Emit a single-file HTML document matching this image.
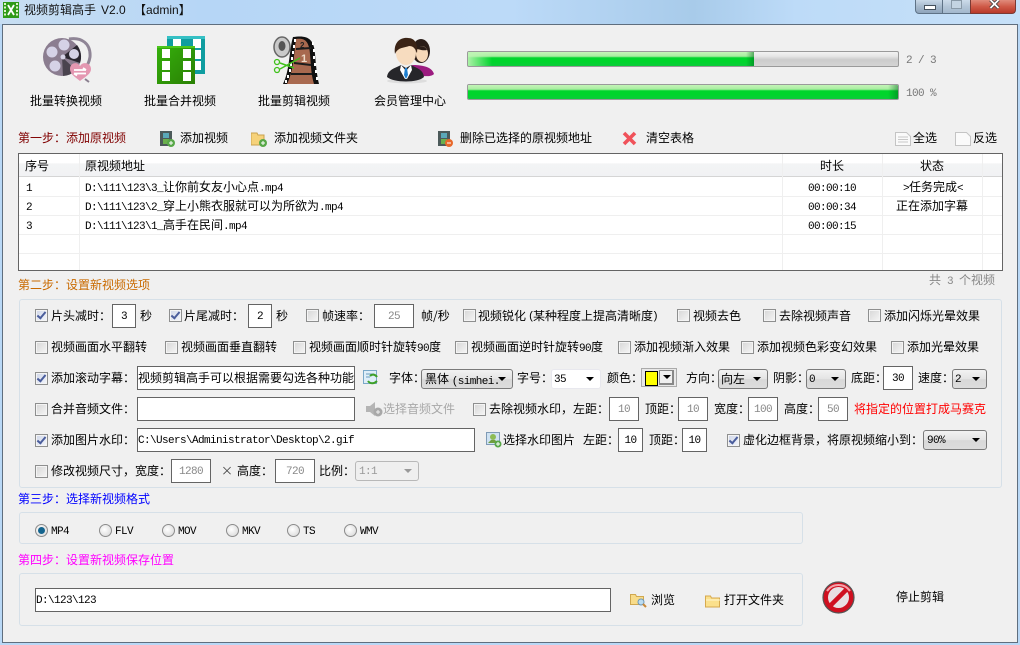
<!DOCTYPE html>
<html><head><meta charset="utf-8"><style>
html,body{margin:0;padding:0;width:1020px;height:645px;overflow:hidden}
body{position:relative;background:#b9d8f6;font:12px/14px "WenQuanYi Zen Hei","Noto Sans CJK SC","Liberation Sans",sans-serif;color:#000}
div,svg{position:absolute}
.t{position:absolute;white-space:nowrap;line-height:14px}
.m{font-family:"Liberation Mono",monospace;font-size:11px;letter-spacing:-.6px}
.m i{font:12px/14px "WenQuanYi Zen Hei","Noto Sans CJK SC",sans-serif;letter-spacing:0}
.c{position:absolute;width:11px;height:11px;border:1px solid #8e8f8f;background:linear-gradient(135deg,#d6d6d6,#f6f6f6);box-shadow:inset 0 0 0 1px #f4f4f4}
.k{background:linear-gradient(135deg,#cfd6e8,#f4f6fb)}
.k:after{content:"";position:absolute;left:3px;top:0;width:3px;height:7px;border:solid #4a5d9c;border-width:0 2px 2px 0;transform:rotate(40deg)}
.i{position:absolute;box-sizing:border-box;border:1px solid #646464;background:#fff;height:24px;text-align:center;line-height:25px;font-family:"Liberation Mono",monospace;font-size:11px;letter-spacing:-.6px;white-space:nowrap}
.d{color:#888}
.s{position:absolute;box-sizing:border-box;border:1px solid #7a7a7a;border-radius:3px;height:20px;background:linear-gradient(#f2f2f2,#e4e4e4 50%,#d8d8d8 52%,#dcdcdc);line-height:17px;padding-left:4px;white-space:nowrap;overflow:hidden}
.s.m{line-height:20px}
.s:after{content:"";position:absolute;right:6px;top:7px;border:4px solid transparent;border-top:4px solid #000;border-bottom:0}
.s.n:after{border-top-color:#999}
.g{position:absolute;box-sizing:border-box;border:1px solid #d6e0e8;border-radius:3px}
.r{position:absolute;box-sizing:border-box;width:13px;height:13px;border:1px solid #8b8b8b;border-radius:50%;background:radial-gradient(circle at 40% 40%,#fff,#d4d4d4)}
.l{position:absolute;background:#efefef}
.b{position:absolute;height:16px;box-sizing:border-box;border:1px solid #9a9a9a;border-radius:2px;overflow:hidden;background:linear-gradient(#f2f2f2 0,#e6e6e6 30%,#cccccc 55%,#d4d4d4 100%)}
.f{position:absolute;left:0;top:0;bottom:0;background:linear-gradient(#c4f5b8 0,#a8eda0 30%,#00d52c 42%,#00d52c 70%,#0dcb3a 100%)}
</style></head><body>

<!-- title bar -->
<div style="left:0;top:0;width:1020px;height:24px;background:linear-gradient(90deg,#c8def2 0,#b6d6f6 20%,#bcdaf8 50%,#a8cbea 68%,#bddbf8 78%,#c6e0f8 100%)"></div>
<svg style="left:3px;top:2px" width="16" height="16" viewBox="0 0 16 16"><rect width="16" height="16" fill="#2f9a18"/><path d="M2 1v14M14 1v14" stroke="#dff3c8" stroke-width="2" stroke-dasharray="2 1.5"/><path d="M5 3l6 10M11 3l-6 10" stroke="#fff" stroke-width="1.8"/></svg>
<div class="t" style="left:24px;top:3px;color:#111">视频剪辑高手</div>
<div class="t" style="left:101px;top:3px;color:#111;font-family:'Liberation Sans',sans-serif">V2.0</div>
<div class="t" style="left:134px;top:3px;color:#111">【<span style="font-family:'Liberation Sans',sans-serif">admin</span>】</div>

<!-- window buttons -->
<div style="left:915px;top:0;width:28px;height:14px;box-sizing:border-box;border:1px solid #5e7286;border-top:0;border-radius:0 0 0 4px;background:linear-gradient(#c9d9e8,#a7bacd 50%,#8ea4bb)"></div>
<div style="left:924px;top:5px;width:12px;height:5px;box-sizing:border-box;border:1px solid #44505c;background:#fff"></div>
<div style="left:943px;top:0;width:27px;height:14px;box-sizing:border-box;border-bottom:1px solid #5e7286;background:linear-gradient(#cddcea,#b4c6d8 50%,#a3b8cd)"></div>
<div style="left:951px;top:0;width:11px;height:9px;box-sizing:border-box;border:1px solid #8a9aa8;background:#c4d4e2"></div>
<div style="left:970px;top:0;width:46px;height:14px;box-sizing:border-box;border:1px solid #7a3a34;border-top:0;border-radius:0 0 4px 0;background:linear-gradient(#e08c7c,#cf5a48 50%,#b83a2a)"></div>
<svg style="left:988px;top:0" width="13" height="9" viewBox="0 0 13 9"><path d="M2.500 0l8 8M10.500 0l-8 8" stroke="#3e3e3e" stroke-width="3.400"/><path d="M2.500 0l8 8M10.500 0l-8 8" stroke="#fff" stroke-width="1.800"/></svg>

<!-- window body -->
<div style="left:2px;top:24px;width:1016px;height:619px;box-sizing:border-box;border:1px solid #5f6e7e;background:#f0f0f0"></div>

<!-- big icons -->
<svg style="left:43px;top:37px" width="50" height="47" viewBox="0 0 50 47">
<path d="M26 2c12-2 22 4 21 18-1 6-3 9-5 11" fill="none" stroke="#8f8596" stroke-width="3"/>
<circle cx="19" cy="20" r="19" fill="#8b7d90"/>
<path d="M19 20L34 8a19 19 0 0 1 3 18z" fill="#2b2730"/><path d="M19 20L20 39a19 19 0 0 0 13-6z" fill="#4a434e"/>
<g fill="#d5d2e6"><circle cx="21" cy="8" r="5.500"/><circle cx="9" cy="15" r="5.500"/><circle cx="12" cy="29" r="5.500"/><circle cx="31" cy="17" r="5"/><circle cx="20" cy="20" r="2.500"/></g>
<path d="M37 44c-5-4-10-7-10-12 0-6 7-8 10-3 3-5 11-3 11 3 0 5-6 8-11 12z" fill="#e497b1"/>
<path d="M31 33h12M43 33l-3-2M43 36.500H31M31 36.500l3 2" stroke="#fff" stroke-width="1.800" fill="none"/>
<path d="M42 42l4 3" stroke="#8a7f8f" stroke-width="2"/></svg>

<svg style="left:157px;top:36px" width="49" height="48" viewBox="0 0 49 48">
<defs><linearGradient id="gg" x1="0" y1="0" x2="1" y2="1"><stop offset="0" stop-color="#35b00c"/><stop offset="1" stop-color="#2a8004"/></linearGradient></defs>
<rect x="10" y="0" width="38" height="38" fill="#0f9da0"/><rect x="10" y="0" width="38" height="3" fill="#35c0c4"/>
<g fill="#fff"><rect x="16" y="3" width="8" height="9"/><rect x="36" y="3" width="8" height="9"/><rect x="36" y="14" width="8" height="9"/><rect x="36" y="25" width="8" height="9"/></g>
<rect x="0" y="10" width="38" height="38" fill="url(#gg)"/><rect x="0" y="10" width="38" height="2" fill="#4cc61c"/>
<g fill="#fff"><rect x="5" y="13" width="8" height="9"/><rect x="26" y="13" width="8" height="9"/><rect x="5" y="25" width="8" height="9"/><rect x="26" y="25" width="8" height="9"/><rect x="5" y="36" width="8" height="9"/><rect x="26" y="36" width="8" height="9"/></g></svg>

<svg style="left:272px;top:36px" width="48" height="48" viewBox="0 0 48 48">
<ellipse cx="10" cy="11" rx="8" ry="10" fill="#c9c9c9" stroke="#666" stroke-width="1.500"/><ellipse cx="10" cy="10" rx="3.500" ry="5" fill="#555"/>
<path d="M21 1C35-1 42 2 43 18c1 12 2 22 4 30H11C18 34 17 14 21 1z" fill="#101010"/>
<path d="M24 3c8-1 13 1 14 15 1 12 1 20 4 30H15C22 34 22 16 24 3z" fill="#a8694f"/>
<path d="M24 13l15-1M22 27l17 2M19 38l21 0" stroke="#1c1c1c" stroke-width="2"/>
<g fill="#fff"><rect x="22" y="3" width="2" height="3"/><rect x="21" y="9" width="2" height="3"/><rect x="20" y="15" width="2" height="3"/><rect x="19" y="21" width="2" height="3"/><rect x="18" y="27" width="2" height="3"/><rect x="17" y="33" width="2" height="3"/><rect x="15" y="39" width="2" height="3"/><rect x="13" y="44" width="2" height="3"/><rect x="40" y="6" width="2" height="3"/><rect x="41" y="13" width="2" height="3"/><rect x="41" y="20" width="2" height="3"/><rect x="42" y="27" width="2" height="3"/><rect x="43" y="34" width="2" height="3"/><rect x="44" y="41" width="2" height="3"/></g>
<text x="28" y="12" font-size="8" font-family="Liberation Sans" font-weight="bold" fill="#222">2</text><text x="29" y="26" font-size="11" font-family="Liberation Sans" font-weight="bold" fill="#eedbc8">1</text>
<path d="M8 33l20-11M8 27l14 5" stroke="#3fc11a" stroke-width="1.500" fill="none"/><circle cx="5" cy="26" r="2.500" fill="none" stroke="#3fc11a" stroke-width="1.300"/><circle cx="5" cy="34" r="2.500" fill="none" stroke="#3fc11a" stroke-width="1.300"/></svg>

<svg style="left:387px;top:37px" width="49" height="47" viewBox="0 0 49 47">
<ellipse cx="20" cy="44" rx="20" ry="2.500" fill="#ddd"/>
<path d="M25 28c8 0 20 1 22 9-3 3-9 2-12 2-6-2-8-5-10-11z" fill="#9c1c80"/>
<ellipse cx="34" cy="14" rx="9" ry="12" fill="#2a1d18"/><ellipse cx="35" cy="17" rx="6" ry="8" fill="#f6d8b8"/><path d="M29 12c3-4 9-4 11 1-5 1-8-1-11-1z" fill="#2a1d18"/>
<path d="M0 40c1-8 9-9 14-12l5 3 5-3c5 3 12 4 13 12-6 6-30 6-37 0z" fill="#26262a"/>
<path d="M14 28l5 6 5-6 1 5-5 9h-2l-5-9z" fill="#fff"/><path d="M18 31h2l1 7-2 4-2-4z" fill="#1e7fd0"/>
<ellipse cx="19" cy="16" rx="10" ry="12" fill="#f7dcbf"/><path d="M8 17C6 4 15 0 21 1c7 0 10 6 9 15-2-5-4-7-8-7-5 2-11 1-14 8z" fill="#3b2416"/></svg>

<div class="t" style="left:30px;top:94px">批量转换视频</div>
<div class="t" style="left:144px;top:94px">批量合并视频</div>
<div class="t" style="left:258px;top:94px">批量剪辑视频</div>
<div class="t" style="left:374px;top:94px">会员管理中心</div>

<!-- progress -->
<div class="b" style="left:467px;top:51px;width:432px"><div class="f" style="width:286px"></div><div style="left:0;top:0;bottom:0;width:24px;background:linear-gradient(90deg,rgba(190,245,180,.9),rgba(190,245,180,0))"></div><div style="left:278px;top:0;bottom:0;width:8px;background:linear-gradient(90deg,rgba(0,120,30,0),rgba(0,110,30,.55))"></div></div>
<div class="b" style="left:467px;top:84px;width:432px"><div class="f" style="width:100%"></div><div style="right:0;top:0;bottom:0;width:10px;background:linear-gradient(90deg,rgba(0,120,30,0),rgba(0,110,30,.5))"></div></div>
<div class="t m" style="left:906px;top:54px;color:#777">2 / 3</div>
<div class="t m" style="left:906px;top:87px;color:#777">100 %</div>

<!-- step 1 toolbar -->
<div class="t" style="left:18px;top:131px;color:#800000">第一步：添加原视频</div>
<svg style="left:160px;top:131px" width="15" height="16" viewBox="0 0 15 16"><rect x="0" y="0" width="12" height="15" fill="#4c5a5a"/><rect x="3" y="2" width="6" height="5" fill="#5aa8b8"/><rect x="3" y="8" width="6" height="5" fill="#6ab04c"/><circle cx="11" cy="12" r="4" fill="#58a848"/><path d="M9 12h4M11 10v4" stroke="#fff"/></svg>
<div class="t" style="left:180px;top:131px">添加视频</div>
<svg style="left:251px;top:132px" width="16" height="15" viewBox="0 0 16 15"><path d="M0 1h6l1 2h6v10H0z" fill="#f6d27a" stroke="#c9a24e"/><circle cx="12" cy="11" r="4" fill="#58a848"/><path d="M10 11h4M12 9v4" stroke="#fff"/></svg>
<div class="t" style="left:274px;top:131px">添加视频文件夹</div>
<svg style="left:438px;top:131px" width="15" height="16" viewBox="0 0 15 16"><rect x="0" y="0" width="12" height="15" fill="#4c5a5a"/><rect x="3" y="2" width="6" height="5" fill="#5aa8b8"/><rect x="3" y="8" width="6" height="5" fill="#6ab04c"/><circle cx="11" cy="12" r="4" fill="#e8682a"/><path d="M9 12h4" stroke="#fff"/></svg>
<div class="t" style="left:460px;top:131px">删除已选择的原视频地址</div>
<svg style="left:622px;top:131px" width="15" height="15" viewBox="0 0 15 15"><path d="M2 2l11 11M13 2L2 13" stroke="#f0525a" stroke-width="3.600"/></svg>
<div class="t" style="left:646px;top:131px">清空表格</div>
<svg style="left:895px;top:132px" width="16" height="14" viewBox="0 0 16 14"><path d="M.5.500h11l4 4v9H.5z" fill="#fafafa" stroke="#c4c4c4"/><path d="M3 5h10M3 7.500h10M3 10h10" stroke="#c8c8c8"/></svg>
<div class="t" style="left:913px;top:131px">全选</div>
<svg style="left:955px;top:132px" width="16" height="14" viewBox="0 0 16 14"><path d="M.5.500h11l4 4v9H.5z" fill="#fafafa" stroke="#c4c4c4"/></svg>
<div class="t" style="left:973px;top:131px">反选</div>

<!-- table -->
<div style="left:18px;top:153px;width:985px;height:118px;box-sizing:border-box;border:1px solid #646464;background:#fff"></div>
<div style="left:19px;top:154px;width:983px;height:22px;background:linear-gradient(#fff 0,#fff 40%,#f3f4f5 45%,#f1f2f4 100%)"></div>
<div class="l" style="left:19px;top:176px;width:983px;height:1px;background:#d5d5d5"></div>
<div class="l" style="left:19px;top:196px;width:983px;height:1px"></div>
<div class="l" style="left:19px;top:215px;width:983px;height:1px"></div>
<div class="l" style="left:19px;top:234px;width:983px;height:1px"></div>
<div class="l" style="left:19px;top:253px;width:983px;height:1px"></div>
<div class="l" style="left:79px;top:154px;width:1px;height:116px"></div>
<div class="l" style="left:782px;top:154px;width:1px;height:116px"></div>
<div class="l" style="left:882px;top:154px;width:1px;height:116px"></div>
<div class="l" style="left:982px;top:154px;width:1px;height:116px"></div>
<div class="t" style="left:25px;top:159px">序号</div>
<div class="t" style="left:85px;top:159px">原视频地址</div>
<div class="t" style="left:820px;top:159px">时长</div>
<div class="t" style="left:920px;top:159px">状态</div>
<div class="t m" style="left:26px;top:182px">1</div>
<div class="t m" style="left:26px;top:201px">2</div>
<div class="t m" style="left:26px;top:220px">3</div>
<div class="t m" style="left:85px;top:180px">D:\111\123\3_<i>让你前女友小心点</i>.mp4</div>
<div class="t m" style="left:85px;top:199px">D:\111\123\2_<i>穿上小熊衣服就可以为所欲为</i>.mp4</div>
<div class="t m" style="left:85px;top:218px">D:\111\123\1_<i>高手在民间</i>.mp4</div>
<div class="t m" style="left:808px;top:182px">00:00:10</div>
<div class="t m" style="left:808px;top:201px">00:00:34</div>
<div class="t m" style="left:808px;top:220px">00:00:15</div>
<div class="t m" style="left:903px;top:180px">&gt;<i>任务完成</i>&lt;</div>
<div class="t" style="left:896px;top:199px">正在添加字幕</div>
<div class="t" style="left:929px;top:273px;color:#888">共</div>
<div class="t m" style="left:947px;top:275px;color:#888">3</div>
<div class="t" style="left:959px;top:273px;color:#888">个视频</div>

<!-- step 2 -->
<div class="t" style="left:18px;top:278px;color:#c96a00">第二步：设置新视频选项</div>
<div class="g" style="left:19px;top:299px;width:983px;height:189px"></div>

<!-- row 1 -->
<div class="c k" style="left:35px;top:309px"></div><div class="t" style="left:51px;top:309px">片头减时：</div>
<div class="i" style="left:112px;top:304px;width:24px">3</div><div class="t" style="left:140px;top:309px">秒</div>
<div class="c k" style="left:169px;top:309px"></div><div class="t" style="left:184px;top:309px">片尾减时：</div>
<div class="i" style="left:248px;top:304px;width:24px">2</div><div class="t" style="left:276px;top:309px">秒</div>
<div class="c" style="left:306px;top:309px"></div><div class="t" style="left:322px;top:309px">帧速率：</div>
<div class="i d" style="left:374px;top:304px;width:40px">25</div><div class="t" style="left:421px;top:309px">帧/秒</div>
<div class="c" style="left:463px;top:309px"></div><div class="t" style="left:478px;top:309px">视频锐化</div>
<div class="t m" style="left:528px;top:310px">(</div>
<div class="t" style="left:533px;top:309px">某种程度上提高清晰度</div>
<div class="t m" style="left:652px;top:310px">)</div>
<div class="c" style="left:677px;top:309px"></div><div class="t" style="left:693px;top:309px">视频去色</div>
<div class="c" style="left:763px;top:309px"></div><div class="t" style="left:779px;top:309px">去除视频声音</div>
<div class="c" style="left:868px;top:309px"></div><div class="t" style="left:884px;top:309px">添加闪烁光晕效果</div>

<!-- row 2 -->
<div class="c" style="left:35px;top:341px"></div><div class="t" style="left:51px;top:340px">视频画面水平翻转</div>
<div class="c" style="left:165px;top:341px"></div><div class="t" style="left:181px;top:340px">视频画面垂直翻转</div>
<div class="c" style="left:293px;top:341px"></div><div class="t" style="left:309px;top:340px">视频画面顺时针旋转<span class="m">90</span>度</div>
<div class="c" style="left:455px;top:341px"></div><div class="t" style="left:471px;top:340px">视频画面逆时针旋转<span class="m">90</span>度</div>
<div class="c" style="left:618px;top:341px"></div><div class="t" style="left:634px;top:340px">添加视频渐入效果</div>
<div class="c" style="left:741px;top:341px"></div><div class="t" style="left:757px;top:340px">添加视频色彩变幻效果</div>
<div class="c" style="left:891px;top:341px"></div><div class="t" style="left:907px;top:340px">添加光晕效果</div>

<!-- row 3 -->
<div class="c k" style="left:35px;top:372px"></div><div class="t" style="left:51px;top:371px">添加滚动字幕：</div>
<div class="i" style="left:137px;top:366px;width:218px;text-align:left;line-height:22px;letter-spacing:0;font-size:12px;overflow:hidden;font-family:'WenQuanYi Zen Hei','Noto Sans CJK SC',sans-serif">视频剪辑高手可以根据需要勾选各种功能</div>
<svg style="left:363px;top:370px" width="16" height="16" viewBox="0 0 16 16"><rect x=".5" y=".5" width="13" height="13" fill="#dfeef8" stroke="#7aa8c8"/><path d="M3 4h8M3 7h4" stroke="#6a9cc0"/><path d="M5 11c2 3 6 3 9 0M14 7c-2-3-5-3-7-1" stroke="#3ea028" stroke-width="2" fill="none"/></svg>
<div class="t" style="left:389px;top:371px">字体：</div>
<div class="s" style="left:421px;top:369px;width:92px;padding-left:3px">黑体 <span class="m" style="position:relative;top:1px">(simhei.</span></div>
<div class="t" style="left:517px;top:371px">字号：</div>
<div class="s m" style="left:551px;top:369px;width:50px;border-color:#e8e8ee;background:#fff;padding-left:2px">35</div>
<div class="t" style="left:607px;top:371px">颜色：</div>
<div style="left:641px;top:368px;width:36px;height:19px;box-sizing:border-box;border:1px solid #aaa;background:#e8e8e8"></div>
<div style="left:645px;top:371px;width:11px;height:13px;border:1px solid #000;background:#ff0"></div>
<div style="left:659px;top:370px;width:15px;height:15px;box-sizing:border-box;border:1px solid #888;border-right-width:2px;border-bottom-width:2px;background:#efefef"></div>
<div style="left:663px;top:375px;width:0;height:0;border:4px solid transparent;border-top:4px solid #000;border-bottom:0"></div>
<div class="t" style="left:686px;top:371px">方向：</div>
<div class="s" style="left:718px;top:369px;width:50px;padding-left:2px">向左</div>
<div class="t" style="left:773px;top:371px">阴影：</div>
<div class="s m" style="left:806px;top:369px;width:40px;padding-left:2px">0</div>
<div class="t" style="left:851px;top:371px">底距：</div>
<div class="i" style="left:883px;top:366px;width:30px">30</div>
<div class="t" style="left:918px;top:371px">速度：</div>
<div class="s m" style="left:952px;top:369px;width:35px;padding-left:2px">2</div>

<!-- row 4 -->
<div class="c" style="left:35px;top:403px"></div><div class="t" style="left:51px;top:402px">合并音频文件：</div>
<div class="i" style="left:137px;top:397px;width:218px"></div>
<svg style="left:366px;top:402px" width="17" height="15" viewBox="0 0 17 15"><path d="M0 4h4l5-4v14l-5-4H0z" fill="#b4b4b4"/><circle cx="12" cy="10" r="4.500" fill="#a8a8a8"/><path d="M10 10h4M12 8v4" stroke="#eee"/></svg>
<div class="t" style="left:383px;top:402px;color:#a8a8a8">选择音频文件</div>
<div class="c" style="left:473px;top:403px"></div><div class="t" style="left:489px;top:402px">去除视频水印，左距：</div>
<div class="i d" style="left:609px;top:397px;width:30px">10</div>
<div class="t" style="left:645px;top:402px">顶距：</div>
<div class="i d" style="left:678px;top:397px;width:30px">10</div>
<div class="t" style="left:714px;top:402px">宽度：</div>
<div class="i d" style="left:748px;top:397px;width:30px">100</div>
<div class="t" style="left:784px;top:402px">高度：</div>
<div class="i d" style="left:818px;top:397px;width:30px">50</div>
<div class="t" style="left:854px;top:402px;color:#f00">将指定的位置打成马赛克</div>

<!-- row 5 -->
<div class="c k" style="left:35px;top:434px"></div><div class="t" style="left:51px;top:433px">添加图片水印：</div>
<div class="i" style="left:137px;top:428px;width:338px;text-align:left">C:\Users\Administrator\Desktop\2.gif</div>
<svg style="left:486px;top:432px" width="16" height="16" viewBox="0 0 16 16"><rect x=".5" y=".5" width="13" height="12" fill="#cfe2f2" stroke="#7f9ab5"/><circle cx="7" cy="5" r="3" fill="#8dbb55"/><path d="M2 11l3-3h4l3 3z" fill="#6f9e3e"/><circle cx="12" cy="12" r="3.500" fill="#58a848"/><path d="M10 12h4M12 10v4" stroke="#fff"/></svg>
<div class="t" style="left:503px;top:433px">选择水印图片</div>
<div class="t" style="left:583px;top:433px">左距：</div>
<div class="i" style="left:618px;top:428px;width:25px">10</div>
<div class="t" style="left:649px;top:433px">顶距：</div>
<div class="i" style="left:682px;top:428px;width:25px">10</div>
<div class="c k" style="left:727px;top:434px"></div><div class="t" style="left:743px;top:433px">虚化边框背景，将原视频缩小到：</div>
<div class="s m" style="left:923px;top:430px;width:64px;padding-left:3px">90%</div>

<!-- row 6 -->
<div class="c" style="left:35px;top:465px"></div><div class="t" style="left:51px;top:464px">修改视频尺寸，宽度：</div>
<div class="i d" style="left:171px;top:459px;width:40px">1280</div>
<div class="t" style="left:221px;top:464px;color:#444">×</div>
<div class="t" style="left:237px;top:464px">高度：</div>
<div class="i d" style="left:275px;top:459px;width:40px">720</div>
<div class="t" style="left:319px;top:464px">比例：</div>
<div class="s m n" style="left:355px;top:461px;width:64px;border-color:#b8b8b8;background:#efefef;color:#999;padding-left:3px">1:1</div>

<!-- step 3 -->
<div class="t" style="left:18px;top:492px;color:#00f">第三步：选择新视频格式</div>
<div class="g" style="left:19px;top:512px;width:784px;height:32px"></div>
<div class="r" style="left:35px;top:524px"></div><div style="left:38px;top:527px;width:7px;height:7px;border-radius:50%;background:#14648e"></div>
<div class="t m" style="left:51px;top:525px">MP4</div>
<div class="r" style="left:99px;top:524px"></div><div class="t m" style="left:115px;top:525px">FLV</div>
<div class="r" style="left:162px;top:524px"></div><div class="t m" style="left:178px;top:525px">MOV</div>
<div class="r" style="left:226px;top:524px"></div><div class="t m" style="left:242px;top:525px">MKV</div>
<div class="r" style="left:287px;top:524px"></div><div class="t m" style="left:303px;top:525px">TS</div>
<div class="r" style="left:344px;top:524px"></div><div class="t m" style="left:360px;top:525px">WMV</div>

<!-- step 4 -->
<div class="t" style="left:18px;top:553px;color:#f0f">第四步：设置新视频保存位置</div>
<div class="g" style="left:19px;top:573px;width:784px;height:53px"></div>
<div class="i" style="left:35px;top:588px;width:576px;text-align:left">D:\123\123</div>
<svg style="left:630px;top:593px" width="17" height="15" viewBox="0 0 17 15"><path d="M.5 1.500h5l1 2h7v8H.5z" fill="#f8dc8a" stroke="#d0a850"/><circle cx="11" cy="9" r="3" fill="#bcdcf0" stroke="#6d98b8"/><path d="M13 11l3 3" stroke="#c88a3a" stroke-width="2"/></svg>
<div class="t" style="left:651px;top:593px">浏览</div>
<svg style="left:705px;top:595px" width="16" height="13" viewBox="0 0 16 13"><path d="M.5 1h5l1 2h8v9H.5z" fill="#fbe08c" stroke="#d6a94e"/><path d="M1 5h14" stroke="#fff6d0"/></svg>
<div class="t" style="left:724px;top:593px">打开文件夹</div>
<svg style="left:822px;top:581px" width="33" height="33" viewBox="0 0 33 33"><circle cx="16.500" cy="16.500" r="15.500" fill="#cf1020" stroke="#555" stroke-width="1.200"/><circle cx="16.500" cy="16.500" r="10.500" fill="#e8dfe2"/><path d="M9 24L24 9" stroke="#cf1020" stroke-width="4.500"/><path d="M5 10a14 14 0 0 1 23 0" fill="none" stroke="#f6a0a8" stroke-width="2"/></svg>
<div class="t" style="left:896px;top:590px">停止剪辑</div>
</body></html>
